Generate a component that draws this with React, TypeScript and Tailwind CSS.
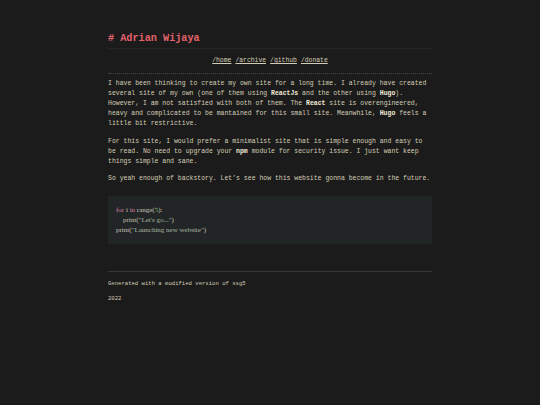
export default function App() {
  const mono = { fontFamily: '"Liberation Mono", "DejaVu Sans Mono", monospace' };
  return (
    <div className="min-h-[405px] w-full bg-[#1b1b1b] text-[#d4cdb6] antialiased" style={mono}>
      <div className="mx-auto w-[324px] pt-[32px]">
        <h1 className="text-[10.2px] font-bold leading-[14px] text-[#e0626a]"># Adrian Wijaya</h1>
        <div className="mt-[2px] border-t border-[#252525]" />
        <nav className="flex justify-center gap-[4px] pt-[8px] pb-[8px] text-[6.4px] leading-[8px]">
          <a className="underline">/home</a>
          <a className="underline">/archive</a>
          <a className="underline">/github</a>
          <a className="underline">/donate</a>
        </nav>
        <div className="border-t border-dotted border-[#4a4a4a]" />
        <div className="mt-[5px] flex flex-col gap-[8px] text-[6.47px] leading-[10px]">
          <p>
            I have been thinking to create my own site for a long time. I already have created several site of my
            own (one of them using <b className="text-[#f2ecd8]">ReactJs</b> and the other using{" "}
            <b className="text-[#f2ecd8]">Hugo</b>). However, I am not satisfied with both of them. The{" "}
            <b className="text-[#f2ecd8]">React</b> site is overengineered, heavy and complicated to be mantained for
            this small site. Meanwhile, <b className="text-[#f2ecd8]">Hugo</b> feels a little bit restrictive.
          </p>
          <p>
            For this site, I would prefer a minimalist site that is simple enough and easy to be read. No need to
            upgrade your <b className="text-[#f2ecd8]">npm</b> module for security issue. I just want keep things
            simple and sane.
          </p>
          <p className="-mt-[1px]">So yeah enough of backstory. Let’s see how this website gonna become in the future.</p>
        </div>
        <pre
          className="mt-[12px] h-[48px] bg-[#222526] px-[8px] pt-[9px] text-[7px] leading-[10px] text-[#c9c3b6]"
          style={{ fontFamily: '"Liberation Serif", serif' }}
        >
          <span className="text-[#d77fa8]">for</span> i <span className="text-[#d77fa8]">in</span> range(
          <span className="text-[#7fb36a]">5</span>):{"\n"}
          {"    "}print(<span className="text-[#a8b5a0]">"Let's go..."</span>){"\n"}
          print(<span className="text-[#a8b5a0]">"Launching new website"</span>)
        </pre>
        <div className="mt-[27px] border-t border-[#363636]" />
        <div className="pt-[7px] text-[5.6px] leading-[10px]">
          <p>Generated with a modified version of ssg5</p>
          <p className="mt-[5px]">2022</p>
        </div>
      </div>
    </div>
  );
}
